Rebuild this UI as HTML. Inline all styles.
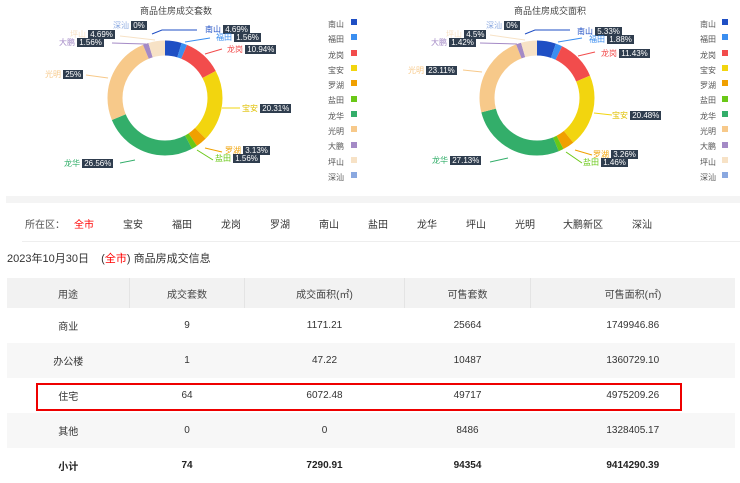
<!DOCTYPE html>
<html><head><meta charset="utf-8"><style>
body{margin:0;width:740px;height:479px;background:#fff;font-family:"Liberation Sans","Noto Sans CJK SC",sans-serif;position:relative;overflow:hidden;color:#333}
.a{position:absolute;white-space:nowrap}
.t{font-size:8px;line-height:9px}
.b{background:#2f3d4e;color:#fff;padding:0 2px;font-size:8px;line-height:9px}
.lg{font-size:8px;color:#555}
.sq{position:absolute;width:6px;height:6px}
.f{position:absolute;top:216px;font-size:10px;color:#333}
table{position:absolute;left:7px;top:278px;width:728px;border-collapse:collapse;font-size:10px}
td{text-align:center;padding:0}
</style></head><body>

<div class="a" style="left:140px;top:4px;font-size:9px;color:#444">商品住房成交套数</div>
<div class="a" style="left:514px;top:4px;font-size:9px;color:#444">商品住房成交面积</div>

<svg class="a" style="left:0;top:0" width="740" height="200">
<g transform="translate(165,98) rotate(-90)" fill="none" stroke-width="15">
<circle r="50" pathLength="100" stroke="#1f4fc4" stroke-dasharray="4.69 100" stroke-dashoffset="0"/>
<circle r="50" pathLength="100" stroke="#3a8ef0" stroke-dasharray="1.56 100" stroke-dashoffset="-4.69"/>
<circle r="50" pathLength="100" stroke="#f24c4c" stroke-dasharray="10.94 100" stroke-dashoffset="-6.25"/>
<circle r="50" pathLength="100" stroke="#f2d50f" stroke-dasharray="20.31 100" stroke-dashoffset="-17.19"/>
<circle r="50" pathLength="100" stroke="#f0a000" stroke-dasharray="3.13 100" stroke-dashoffset="-37.5"/>
<circle r="50" pathLength="100" stroke="#6ac817" stroke-dasharray="1.56 100" stroke-dashoffset="-40.63"/>
<circle r="50" pathLength="100" stroke="#33ae6a" stroke-dasharray="26.56 100" stroke-dashoffset="-42.19"/>
<circle r="50" pathLength="100" stroke="#f7c98a" stroke-dasharray="25 100" stroke-dashoffset="-68.75"/>
<circle r="50" pathLength="100" stroke="#a48ac6" stroke-dasharray="1.56 100" stroke-dashoffset="-93.75"/>
<circle r="50" pathLength="100" stroke="#f7e2c6" stroke-dasharray="4.69 100" stroke-dashoffset="-95.31"/>
</g>
<g transform="translate(537,98) rotate(-90)" fill="none" stroke-width="15">
<circle r="50" pathLength="100" stroke="#1f4fc4" stroke-dasharray="5.33 100" stroke-dashoffset="0"/>
<circle r="50" pathLength="100" stroke="#3a8ef0" stroke-dasharray="1.88 100" stroke-dashoffset="-5.33"/>
<circle r="50" pathLength="100" stroke="#f24c4c" stroke-dasharray="11.43 100" stroke-dashoffset="-7.21"/>
<circle r="50" pathLength="100" stroke="#f2d50f" stroke-dasharray="20.48 100" stroke-dashoffset="-18.64"/>
<circle r="50" pathLength="100" stroke="#f0a000" stroke-dasharray="3.26 100" stroke-dashoffset="-39.12"/>
<circle r="50" pathLength="100" stroke="#6ac817" stroke-dasharray="1.46 100" stroke-dashoffset="-42.38"/>
<circle r="50" pathLength="100" stroke="#33ae6a" stroke-dasharray="27.13 100" stroke-dashoffset="-43.84"/>
<circle r="50" pathLength="100" stroke="#f7c98a" stroke-dasharray="23.11 100" stroke-dashoffset="-70.97"/>
<circle r="50" pathLength="100" stroke="#a48ac6" stroke-dasharray="1.42 100" stroke-dashoffset="-94.08"/>
<circle r="50" pathLength="100" stroke="#f7e2c6" stroke-dasharray="4.5 100" stroke-dashoffset="-95.5"/>
</g>
<g fill="none" stroke-width="1">
<polyline points="152,34 162,30 197,30" stroke="#1f4fc4"/>
<polyline points="185,42 210,38" stroke="#3a8ef0"/>
<polyline points="205,54 222,49" stroke="#f24c4c"/>
<polyline points="222,108 240,108" stroke="#f2d50f"/>
<polyline points="205,148 222,152" stroke="#f0a000"/>
<polyline points="197,150 213,160" stroke="#6ac817"/>
<polyline points="120,163 135,160" stroke="#33ae6a"/>
<polyline points="86,75 108,78" stroke="#f7c98a"/>
<polyline points="112,43 146,44" stroke="#a48ac6"/>
<polyline points="120,36 155,40" stroke="#f7e2c6"/>
<polyline points="525,34 535,30 570,30" stroke="#1f4fc4"/>
<polyline points="558,42 582,38" stroke="#3a8ef0"/>
<polyline points="578,56 595,52" stroke="#f24c4c"/>
<polyline points="594,113 612,115" stroke="#f2d50f"/>
<polyline points="575,150 592,155" stroke="#f0a000"/>
<polyline points="566,152 582,163" stroke="#6ac817"/>
<polyline points="490,162 508,158" stroke="#33ae6a"/>
<polyline points="463,70 482,72" stroke="#f7c98a"/>
<polyline points="480,43 517,44" stroke="#a48ac6"/>
<polyline points="490,35 525,40" stroke="#f7e2c6"/>
</g>
</svg>

<!-- left labels -->
<div class="a t" style="left:113px;top:21px;color:#8aa8e0">深汕 <span class="b">0%</span></div>
<div class="a t" style="left:70px;top:30px;color:#f7e2c6">坪山 <span class="b">4.69%</span></div>
<div class="a t" style="left:59px;top:38px;color:#a48ac6">大鹏 <span class="b">1.56%</span></div>
<div class="a t" style="left:45px;top:70px;color:#f7c98a">光明 <span class="b">25%</span></div>
<div class="a t" style="left:64px;top:159px;color:#33ae6a">龙华 <span class="b">26.56%</span></div>
<div class="a t" style="left:205px;top:25px;color:#1f4fc4">南山 <span class="b">4.69%</span></div>
<div class="a t" style="left:216px;top:33px;color:#3a8ef0">福田 <span class="b">1.56%</span></div>
<div class="a t" style="left:227px;top:45px;color:#f24c4c">龙岗 <span class="b">10.94%</span></div>
<div class="a t" style="left:242px;top:104px;color:#e0c000">宝安 <span class="b">20.31%</span></div>
<div class="a t" style="left:225px;top:146px;color:#f0a000">罗湖 <span class="b">3.13%</span></div>
<div class="a t" style="left:215px;top:154px;color:#6ac817">盐田 <span class="b">1.56%</span></div>
<!-- right labels -->
<div class="a t" style="left:486px;top:21px;color:#8aa8e0">深汕 <span class="b">0%</span></div>
<div class="a t" style="left:446px;top:30px;color:#f7e2c6">坪山 <span class="b">4.5%</span></div>
<div class="a t" style="left:431px;top:38px;color:#a48ac6">大鹏 <span class="b">1.42%</span></div>
<div class="a t" style="left:408px;top:66px;color:#f7c98a">光明 <span class="b">23.11%</span></div>
<div class="a t" style="left:432px;top:156px;color:#33ae6a">龙华 <span class="b">27.13%</span></div>
<div class="a t" style="left:577px;top:27px;color:#1f4fc4">南山 <span class="b">5.33%</span></div>
<div class="a t" style="left:589px;top:35px;color:#3a8ef0">福田 <span class="b">1.88%</span></div>
<div class="a t" style="left:601px;top:49px;color:#f24c4c">龙岗 <span class="b">11.43%</span></div>
<div class="a t" style="left:612px;top:111px;color:#e0c000">宝安 <span class="b">20.48%</span></div>
<div class="a t" style="left:593px;top:150px;color:#f0a000">罗湖 <span class="b">3.26%</span></div>
<div class="a t" style="left:583px;top:158px;color:#6ac817">盐田 <span class="b">1.46%</span></div>

<!-- legends -->
<div class="a lg" style="left:328px;top:17px;line-height:15.3px">南山<br>福田<br>龙岗<br>宝安<br>罗湖<br>盐田<br>龙华<br>光明<br>大鹏<br>坪山<br>深汕</div>
<div class="a lg" style="left:700px;top:17px;line-height:15.3px">南山<br>福田<br>龙岗<br>宝安<br>罗湖<br>盐田<br>龙华<br>光明<br>大鹏<br>坪山<br>深汕</div>
<div class="sq" style="left:351px;top:19px;background:#1f4fc4"></div><div class="sq" style="left:351px;top:34px;background:#3a8ef0"></div><div class="sq" style="left:351px;top:50px;background:#f24c4c"></div><div class="sq" style="left:351px;top:65px;background:#f2d50f"></div><div class="sq" style="left:351px;top:80px;background:#f0a000"></div><div class="sq" style="left:351px;top:96px;background:#6ac817"></div><div class="sq" style="left:351px;top:111px;background:#33ae6a"></div><div class="sq" style="left:351px;top:126px;background:#f7c98a"></div><div class="sq" style="left:351px;top:142px;background:#a48ac6"></div><div class="sq" style="left:351px;top:157px;background:#f7e2c6"></div><div class="sq" style="left:351px;top:172px;background:#8aa8e0"></div>
<div class="sq" style="left:722px;top:19px;background:#1f4fc4"></div><div class="sq" style="left:722px;top:34px;background:#3a8ef0"></div><div class="sq" style="left:722px;top:50px;background:#f24c4c"></div><div class="sq" style="left:722px;top:65px;background:#f2d50f"></div><div class="sq" style="left:722px;top:80px;background:#f0a000"></div><div class="sq" style="left:722px;top:96px;background:#6ac817"></div><div class="sq" style="left:722px;top:111px;background:#33ae6a"></div><div class="sq" style="left:722px;top:126px;background:#f7c98a"></div><div class="sq" style="left:722px;top:142px;background:#a48ac6"></div><div class="sq" style="left:722px;top:157px;background:#f7e2c6"></div><div class="sq" style="left:722px;top:172px;background:#8aa8e0"></div>

<div class="a" style="left:6px;top:196px;width:734px;height:7px;background:#f4f4f4"></div>
<div class="f" style="left:25px;color:#555">所在区：</div>
<div class="f" style="left:74px;color:#f00">全市</div>
<div class="f" style="left:123px">宝安</div>
<div class="f" style="left:172px">福田</div>
<div class="f" style="left:221px">龙岗</div>
<div class="f" style="left:270px">罗湖</div>
<div class="f" style="left:319px">南山</div>
<div class="f" style="left:368px">盐田</div>
<div class="f" style="left:417px">龙华</div>
<div class="f" style="left:466px">坪山</div>
<div class="f" style="left:515px">光明</div>
<div class="f" style="left:563px">大鹏新区</div>
<div class="f" style="left:632px">深汕</div>
<div class="a" style="left:22px;top:241px;width:718px;height:1px;background:#eee"></div>

<div class="a" style="left:7px;top:250px;font-size:11px;color:#333">2023年10月30日&nbsp;&nbsp;&nbsp;&nbsp;(<span style="color:#f00">全市</span>) 商品房成交信息</div>

<table>
<tr style="height:30px;background:#f2f2f2;color:#444"><td style="width:122px;border-right:1px solid #e4e4e4">用途</td><td style="width:114px;border-right:1px solid #e4e4e4">成交套数</td><td style="width:159px;border-right:1px solid #e4e4e4">成交面积(㎡)</td><td style="width:125px;border-right:1px solid #e4e4e4">可售套数</td><td>可售面积(㎡)</td></tr>
<tr style="height:35px"><td>商业</td><td>9</td><td>1171.21</td><td>25664</td><td>1749946.86</td></tr>
<tr style="height:35px;background:#f7f7f7"><td>办公楼</td><td>1</td><td>47.22</td><td>10487</td><td>1360729.10</td></tr>
<tr style="height:35px"><td>住宅</td><td>64</td><td>6072.48</td><td>49717</td><td>4975209.26</td></tr>
<tr style="height:35px;background:#f7f7f7"><td>其他</td><td>0</td><td>0</td><td>8486</td><td>1328405.17</td></tr>
<tr style="height:35px;font-weight:bold;color:#222"><td>小计</td><td>74</td><td>7290.91</td><td>94354</td><td>9414290.39</td></tr>
</table>
<div class="a" style="left:36px;top:383px;width:642px;height:24px;border:2px solid #e00"></div>
</body></html>
